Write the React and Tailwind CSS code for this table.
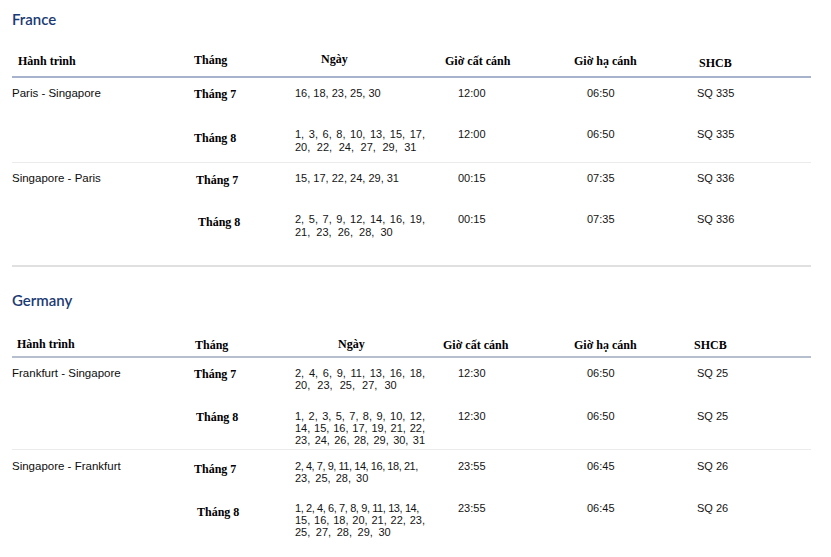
import React from 'react';

const FRANCE = {
  title: 'France',
  titleGap: 'pt-[9px]',
  headH: 'h-[49px]',
  headLine: 'border-[#a7b3cd]',
  lead: 'leading-[13px]',
  heads: [
    { label: 'Hành trình', cls: 'w-[182px] pl-[6px] pb-[8px]' },
    { label: 'Tháng', cls: 'w-[127px] pb-[9px]' },
    { label: 'Ngày', cls: 'w-[124px] pb-[10px]' },
    { label: 'Giờ cất cánh', cls: 'w-[129px] pb-[8px]' },
    { label: 'Giờ hạ cánh', cls: 'w-[125px] pb-[8px]' },
    { label: 'SHCB', cls: 'flex-1 pb-[6px]' },
  ],
  routes: [
    {
      name: 'Paris - Singapore',
      rows: [
        { h: 'h-[41px]', pt: 'pt-[9px]', mon: 'Tháng 7', monCls: 'pl-0', days: [['16, 18, 23, 25, 30', '']], dep: '12:00', arr: '06:50', no: 'SQ 335' },
        { h: 'h-[43px]', pt: 'pt-[9px]', mon: 'Tháng 8', monCls: 'pl-0 pt-[3px]', days: [['1, 3, 6, 8, 10, 13, 15, 17,', 'j'], ['20, 22, 24, 27, 29, 31', '[word-spacing:3.5px]']], dep: '12:00', arr: '06:50', no: 'SQ 335' },
      ],
    },
    {
      name: 'Singapore - Paris',
      rows: [
        { h: 'h-[41px]', pt: 'pt-[9px]', mon: 'Tháng 7', monCls: 'pl-[2px] pt-[1px]', days: [['15, 17, 22, 24, 29, 31', '']], dep: '00:15', arr: '07:35', no: 'SQ 336' },
        { h: 'h-[61px]', pt: 'pt-[9px]', mon: 'Tháng 8', monCls: 'pl-[4px] pt-[2px]', days: [['2, 5, 7, 9, 12, 14, 16, 19,', 'j'], ['21, 23, 26, 28, 30', '[word-spacing:3px]']], dep: '00:15', arr: '07:35', no: 'SQ 336' },
      ],
    },
  ],
};

const GERMANY = {
  title: 'Germany',
  titleGap: 'pt-[23px]',
  headH: 'h-[48px]',
  headLine: 'border-[#b6bfcd]',
  lead: 'leading-[12px]',
  heads: [
    { label: 'Hành trình', cls: 'w-[183px] pl-[5px] pb-[5px]' },
    { label: 'Tháng', cls: 'w-[143px] pb-[4px]' },
    { label: 'Ngày', cls: 'w-[105px] pb-[5px]' },
    { label: 'Giờ cất cánh', cls: 'w-[131px] pb-[4px]' },
    { label: 'Giờ hạ cánh', cls: 'w-[120px] pb-[4px]' },
    { label: 'SHCB', cls: 'flex-1 pb-[4px]' },
  ],
  routes: [
    {
      name: 'Frankfurt - Singapore',
      rows: [
        { h: 'h-[42px]', pt: 'pt-[9px]', mon: 'Tháng 7', monCls: 'pl-0', days: [['2, 4, 6, 9, 11, 13, 16, 18,', 'j'], ['20, 23, 25, 27, 30', '[word-spacing:4px]']], dep: '12:30', arr: '06:50', no: 'SQ 25' },
        { h: 'h-[49px]', pt: 'pt-[10px]', mon: 'Tháng 8', monCls: 'pl-[2px]', days: [['1, 2, 3, 5, 7, 8, 9, 10, 12,', 'j'], ['14, 15, 16, 17, 19, 21, 22,', 'j'], ['23, 24, 26, 28, 29, 30, 31', 'j']], dep: '12:30', arr: '06:50', no: 'SQ 25' },
      ],
    },
    {
      name: 'Singapore - Frankfurt',
      rows: [
        { h: 'h-[43px]', pt: 'pt-[10px]', mon: 'Tháng 7', monCls: 'pl-0 pt-[2px]', days: [['2, 4, 7, 9, 11, 14, 16, 18, 21,', 'tracking-[-0.45px]'], ['23, 25, 28, 30', '[word-spacing:2px]']], dep: '23:55', arr: '06:45', no: 'SQ 26' },
        { h: 'h-[64px]', pt: 'pt-[9px]', mon: 'Tháng 8', monCls: 'pl-[3px] pt-[3px]', days: [['1, 2, 4, 6, 7, 8, 9, 11, 13, 14,', 'tracking-[-0.4px]'], ['15, 16, 18, 20, 21, 22, 23,', 'j'], ['25, 27, 28, 29, 30', '[word-spacing:2.5px]']], dep: '23:55', arr: '06:45', no: 'SQ 26' },
      ],
    },
  ],
};

const serif = "font-['Liberation_Serif',serif] font-bold text-[12px] leading-[14px] text-black";

function Days({ lines }) {
  return (
    <div className="w-[130px] whitespace-nowrap">
      {lines.map(([text, cls], i) => (
        <div key={i} className={cls === 'j' ? 'text-justify [text-align-last:justify]' : cls}>
          {text}
        </div>
      ))}
    </div>
  );
}

function Section({ data, last }) {
  return (
    <section>
      <h2 className={`${data.titleGap} font-['Lato',sans-serif] text-[15px] leading-[20px] font-semibold text-[#1b3a73]`}>{data.title}</h2>
      <div className={`${data.headH} flex items-end border-b-2 ${data.headLine}`}>
        {data.heads.map((h) => (
          <div key={h.label} className={`${h.cls} ${serif}`}>{h.label}</div>
        ))}
      </div>
      {data.routes.map((route, ri) => (
        <div key={route.name} className={ri > 0 ? 'border-t border-[#ebebeb]' : ''}>
          {route.rows.map((r, i) => (
            <div key={i} className={`${r.h} ${r.pt} grid grid-cols-[182px_101px_163px_129px_110px_1fr] text-[11px] ${data.lead} text-[#141414]`}>
              <div className="text-[11.5px] whitespace-nowrap text-[#0d0d0d]">{i === 0 ? route.name : ''}</div>
              <div className={`${r.monCls} ${serif} leading-[13px]`}>{r.mon}</div>
              <Days lines={r.days} />
              <div>{r.dep}</div>
              <div>{r.arr}</div>
              <div>{r.no}</div>
            </div>
          ))}
        </div>
      ))}
      {!last && <div className="h-[2px] bg-[#e0e0e0]" />}
    </section>
  );
}

export default function App() {
  return (
    <div className="w-[831px] h-[557px] overflow-hidden bg-white font-['Liberation_Sans',Arial,sans-serif]">
      <div className="pl-[12px] w-[811px]">
        <Section data={FRANCE} />
        <Section data={GERMANY} last />
      </div>
    </div>
  );
}
